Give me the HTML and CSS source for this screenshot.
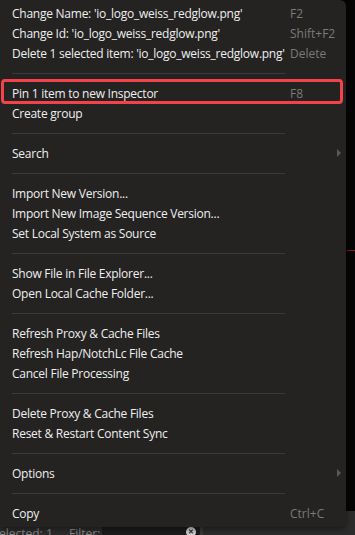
FILE: index.html
```html
<!DOCTYPE html>
<html>
<head>
<meta charset="utf-8">
<link rel="stylesheet" href="styles.css">
</head>
<body>
<div class="app">
  <div class="workspace">
    <div class="redline"></div>
  </div>
  <div class="statusbar">
    <span class="sel">elected: 1</span>
    <span class="filter">Filter:</span>
    <span class="input"><span class="clear">✕</span></span>
  </div>

  <div class="menu">
    <div class="item"><span class="label">Change Name: 'io_logo_weiss_redglow.png'</span><span class="key">F2</span></div>
    <div class="item"><span class="label">Change Id: 'io_logo_weiss_redglow.png'</span><span class="key">Shift+F2</span></div>
    <div class="item"><span class="label">Delete 1 selected item: 'io_logo_weiss_redglow.png'</span><span class="key">Delete</span></div>
    <div class="sep"></div>
    <div class="item highlighted"><span class="label">Pin 1 item to new Inspector</span><span class="key">F8</span></div>
    <div class="item"><span class="label">Create group</span></div>
    <div class="sep"></div>
    <div class="item"><span class="label">Search</span><span class="arrow"></span></div>
    <div class="sep"></div>
    <div class="item"><span class="label">Import New Version...</span></div>
    <div class="item"><span class="label">Import New Image Sequence Version...</span></div>
    <div class="item"><span class="label">Set Local System as Source</span></div>
    <div class="sep"></div>
    <div class="item"><span class="label">Show File in File Explorer...</span></div>
    <div class="item"><span class="label">Open Local Cache Folder...</span></div>
    <div class="sep"></div>
    <div class="item"><span class="label">Refresh Proxy &amp; Cache Files</span></div>
    <div class="item"><span class="label">Refresh Hap/NotchLc File Cache</span></div>
    <div class="item"><span class="label">Cancel File Processing</span></div>
    <div class="sep"></div>
    <div class="item"><span class="label">Delete Proxy &amp; Cache Files</span></div>
    <div class="item"><span class="label">Reset &amp; Restart Content Sync</span></div>
    <div class="sep"></div>
    <div class="item"><span class="label">Options</span><span class="arrow"></span></div>
    <div class="sep"></div>
    <div class="item"><span class="label">Copy</span><span class="key">Ctrl+C</span></div>
  </div>
</div>
</body>
</html>
```

FILE: styles.css
```css
html, body {
  margin: 0;
  padding: 0;
  background: #000;
  width: 355px;
  height: 535px;
  overflow: hidden;
}

.app {
  position: relative;
  width: 355px;
  height: 535px;
  display: flex;
  flex-direction: column;
  font-family: "Open Sans", "Noto Sans", sans-serif;
}

.workspace {
  height: 511px;
  background: #050505;
  position: relative;
}

.redline {
  position: absolute;
  left: 347px;
  top: 250px;
  width: 8px;
  height: 1px;
  background: #8a1a1a;
}

.statusbar {
  flex: 1;
  background: #2c2c2c;
  display: flex;
  align-items: flex-end;
  font-size: 12px;
  color: #8a8a8a;
  line-height: 14px;
  margin-bottom: -6px;
}

.sel { margin-left: -1px; width: 70px; }
.filter { width: 33px; }
.input {
  width: 98px;
  height: 14px;
  background: #1c1c1c;
  position: relative;
  border-right: 3px solid #3a3a3a;
}
.clear {
  position: absolute;
  right: 4px;
  top: 0;
  width: 10px;
  height: 10px;
  border-radius: 50%;
  background: #d0d0d0;
  color: #2c2c2c;
  font-size: 7px;
  line-height: 10px;
  text-align: center;
  font-weight: bold;
}

.menu {
  position: absolute;
  left: 0;
  top: 0;
  width: 346px;
  box-sizing: border-box;
  padding: 3px 0 4px 0;
  background: #242322;
  border-radius: 0 6px 6px 0;
  box-shadow: 0 2px 6px rgba(0,0,0,0.5);
}

.item {
  position: relative;
  height: 20px;
  display: grid;
  grid-template-columns: 278px 1fr;
  align-items: center;
  padding-left: 12px;
  font-size: 12px;
  letter-spacing: -0.25px;
  color: #efefef;
  white-space: nowrap;
}

.key {
  color: #7a7a7a;
  letter-spacing: 0;
}

.highlighted::after {
  content: "";
  position: absolute;
  left: 1px;
  right: 3px;
  top: -4px;
  bottom: -1px;
  border: 3px solid #f2434a;
  border-radius: 4px;
}

.arrow {
  position: absolute;
  right: 5px;
  top: 6px;
  width: 0;
  height: 0;
  border-top: 4px solid transparent;
  border-bottom: 4px solid transparent;
  border-left: 4px solid #5a5958;
}

.sep {
  height: 20px;
  display: flex;
  align-items: center;
  padding: 0 61px 0 12px;
}
.sep::before {
  content: "";
  flex: 1;
  height: 1px;
  background: #3b3a39;
}
```
